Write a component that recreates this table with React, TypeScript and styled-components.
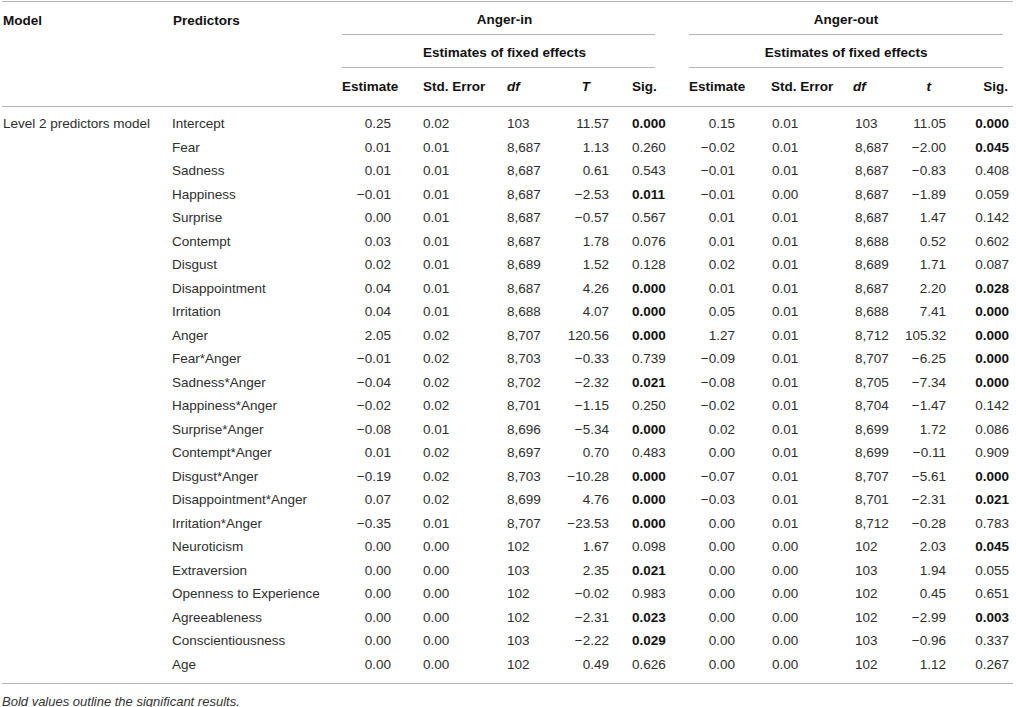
import React from "react";
import styled, { createGlobalStyle } from "styled-components";

const Global = createGlobalStyle`
  html, body { margin: 0; padding: 0; background: #ffffff; }
  body { font-family: "Liberation Sans", Arial, Helvetica, sans-serif; color: #2e2e2e; }
`;

const Page = styled.div`
  width: 1016px;
  height: 707px;
  padding: 1px 0 0 2px;
  box-sizing: border-box;
  overflow: hidden;
`;

const Table = styled.table`
  width: 1011px;
  table-layout: fixed;
  border-collapse: collapse;
  border-top: 1px solid #b4b4b4;
  border-bottom: 1px solid #b4b4b4;
  font-size: 13.5px;
  line-height: 16px;
`;

const HeadCell = styled.th<{ $align?: string; $pl?: number; $pr?: number }>`
  font-weight: bold;
  color: #111;
  text-align: ${(p) => p.$align || "left"};
  padding: 0 ${(p) => p.$pr || 0}px 0 ${(p) => p.$pl || 0}px;
  vertical-align: top;
  white-space: nowrap;
`;

const TopLabel = styled.div`
  padding: 11px 0 0 1px;
`;

const GroupLabel = styled.div<{ $mr: number; $shift: number; $h: number }>`
  margin-right: ${(p) => p.$mr}px;
  height: ${(p) => p.$h}px;
  box-sizing: border-box;
  padding: 10px 0 0 ${(p) => p.$shift}px;
  text-align: center;
  border-bottom: 1px solid #b4b4b4;
`;

const ColHeadRow = styled.tr`
  height: 38px;
  border-bottom: 1px solid #b4b4b4;
  & > th { vertical-align: middle; padding-top: 0; }
`;

const Italic = styled.span`
  font-style: italic;
`;

const Row = styled.tr<{ $first?: boolean; $last?: boolean }>`
  & > td {
    height: 23.5px;
    padding-top: ${(p) => (p.$first ? 6 : 0)}px;
    padding-bottom: ${(p) => (p.$last ? 6 : 0)}px;
  }
`;

const Cell = styled.td<{ $align?: string; $pl?: number; $pr?: number; $bold?: boolean }>`
  text-align: ${(p) => p.$align || "left"};
  padding-left: ${(p) => p.$pl || 0}px;
  padding-right: ${(p) => p.$pr || 0}px;
  font-weight: ${(p) => (p.$bold ? "bold" : "normal")};
  color: ${(p) => (p.$bold ? "#111" : "#2e2e2e")};
  white-space: nowrap;
  vertical-align: middle;
`;

const Footer = styled.div`
  margin-top: 10px;
  font-size: 13px;
  line-height: 16px;
  font-style: italic;
  color: #333;
`;

type Col = { w: number; align: string; pl: number; pr: number; hAlign: string; hpl: number; hpr: number };

const cols: Col[] = [
  { w: 170, align: "left", pl: 1, pr: 0, hAlign: "left", hpl: 1, hpr: 0 },
  { w: 170, align: "left", pl: 0, pr: 0, hAlign: "left", hpl: 0, hpr: 0 },
  { w: 81, align: "right", pl: 0, pr: 32, hAlign: "left", hpl: 0, hpr: 0 },
  { w: 84, align: "left", pl: 0, pr: 0, hAlign: "left", hpl: 0, hpr: 0 },
  { w: 53, align: "left", pl: 0, pr: 0, hAlign: "left", hpl: 0, hpr: 0 },
  { w: 72, align: "right", pl: 0, pr: 23, hAlign: "right", hpl: 0, hpr: 42 },
  { w: 57, align: "left", pl: 0, pr: 0, hAlign: "left", hpl: 0, hpr: 0 },
  { w: 82, align: "right", pl: 0, pr: 36, hAlign: "left", hpl: 0, hpr: 0 },
  { w: 82, align: "left", pl: 1, pr: 0, hAlign: "left", hpl: 0, hpr: 0 },
  { w: 52, align: "left", pl: 2, pr: 0, hAlign: "left", hpl: 0, hpr: 0 },
  { w: 68, align: "right", pl: 0, pr: 27, hAlign: "right", hpl: 0, hpr: 42 },
  { w: 40, align: "right", pl: 0, pr: 4, hAlign: "right", hpl: 0, hpr: 5 },
];

const rows: string[][] = [
  ["Intercept", "0.25", "0.02", "103", "11.57", "0.000*", "0.15", "0.01", "103", "11.05", "0.000*"],
  ["Fear", "0.01", "0.01", "8,687", "1.13", "0.260", "\u22120.02", "0.01", "8,687", "\u22122.00", "0.045*"],
  ["Sadness", "0.01", "0.01", "8,687", "0.61", "0.543", "\u22120.01", "0.01", "8,687", "\u22120.83", "0.408"],
  ["Happiness", "\u22120.01", "0.01", "8,687", "\u22122.53", "0.011*", "\u22120.01", "0.00", "8,687", "\u22121.89", "0.059"],
  ["Surprise", "0.00", "0.01", "8,687", "\u22120.57", "0.567", "0.01", "0.01", "8,687", "1.47", "0.142"],
  ["Contempt", "0.03", "0.01", "8,687", "1.78", "0.076", "0.01", "0.01", "8,688", "0.52", "0.602"],
  ["Disgust", "0.02", "0.01", "8,689", "1.52", "0.128", "0.02", "0.01", "8,689", "1.71", "0.087"],
  ["Disappointment", "0.04", "0.01", "8,687", "4.26", "0.000*", "0.01", "0.01", "8,687", "2.20", "0.028*"],
  ["Irritation", "0.04", "0.01", "8,688", "4.07", "0.000*", "0.05", "0.01", "8,688", "7.41", "0.000*"],
  ["Anger", "2.05", "0.02", "8,707", "120.56", "0.000*", "1.27", "0.01", "8,712", "105.32", "0.000*"],
  ["Fear*Anger", "\u22120.01", "0.02", "8,703", "\u22120.33", "0.739", "\u22120.09", "0.01", "8,707", "\u22126.25", "0.000*"],
  ["Sadness*Anger", "\u22120.04", "0.02", "8,702", "\u22122.32", "0.021*", "\u22120.08", "0.01", "8,705", "\u22127.34", "0.000*"],
  ["Happiness*Anger", "\u22120.02", "0.02", "8,701", "\u22121.15", "0.250", "\u22120.02", "0.01", "8,704", "\u22121.47", "0.142"],
  ["Surprise*Anger", "\u22120.08", "0.01", "8,696", "\u22125.34", "0.000*", "0.02", "0.01", "8,699", "1.72", "0.086"],
  ["Contempt*Anger", "0.01", "0.02", "8,697", "0.70", "0.483", "0.00", "0.01", "8,699", "\u22120.11", "0.909"],
  ["Disgust*Anger", "\u22120.19", "0.02", "8,703", "\u221210.28", "0.000*", "\u22120.07", "0.01", "8,707", "\u22125.61", "0.000*"],
  ["Disappointment*Anger", "0.07", "0.02", "8,699", "4.76", "0.000*", "\u22120.03", "0.01", "8,701", "\u22122.31", "0.021*"],
  ["Irritation*Anger", "\u22120.35", "0.01", "8,707", "\u221223.53", "0.000*", "0.00", "0.01", "8,712", "\u22120.28", "0.783"],
  ["Neuroticism", "0.00", "0.00", "102", "1.67", "0.098", "0.00", "0.00", "102", "2.03", "0.045*"],
  ["Extraversion", "0.00", "0.00", "103", "2.35", "0.021*", "0.00", "0.00", "103", "1.94", "0.055"],
  ["Openness to Experience", "0.00", "0.00", "102", "\u22120.02", "0.983", "0.00", "0.00", "102", "0.45", "0.651"],
  ["Agreeableness", "0.00", "0.00", "102", "\u22122.31", "0.023*", "0.00", "0.00", "102", "\u22122.99", "0.003*"],
  ["Conscientiousness", "0.00", "0.00", "103", "\u22122.22", "0.029*", "0.00", "0.00", "103", "\u22120.96", "0.337"],
  ["Age", "0.00", "0.00", "102", "0.49", "0.626", "0.00", "0.00", "102", "1.12", "0.267"],
];

const colHeads: React.ReactNode[] = [
  "Estimate",
  "Std. Error",
  <Italic>df</Italic>,
  <Italic>T</Italic>,
  "Sig.",
  "Estimate",
  "Std. Error",
  <Italic>df</Italic>,
  <Italic>t</Italic>,
  "Sig.",
];

export default function App() {
  return (
    <Page>
      <Global />
      <Table>
        <colgroup>
          {cols.map((c, i) => (
            <col key={i} style={{ width: c.w }} />
          ))}
        </colgroup>
        <thead>
          <tr>
            <HeadCell rowSpan={3}>
              <TopLabel>Model</TopLabel>
            </HeadCell>
            <HeadCell rowSpan={3}>
              <TopLabel>Predictors</TopLabel>
            </HeadCell>
            <HeadCell colSpan={5}>
              <GroupLabel $mr={34} $shift={12} $h={33}>Anger-in</GroupLabel>
            </HeadCell>
            <HeadCell colSpan={5}>
              <GroupLabel $mr={10} $shift={0} $h={33}>Anger-out</GroupLabel>
            </HeadCell>
          </tr>
          <tr>
            <HeadCell colSpan={5}>
              <GroupLabel $mr={34} $shift={12} $h={33}>Estimates of fixed effects</GroupLabel>
            </HeadCell>
            <HeadCell colSpan={5}>
              <GroupLabel $mr={10} $shift={0} $h={33}>Estimates of fixed effects</GroupLabel>
            </HeadCell>
          </tr>
          <ColHeadRow>
            {colHeads.map((h, i) => {
              const c = cols[i + 2];
              return (
                <HeadCell key={i} $align={c.hAlign} $pl={c.hpl} $pr={c.hpr}>
                  {h}
                </HeadCell>
              );
            })}
          </ColHeadRow>
        </thead>
        <tbody>
          {rows.map((r, ri) => (
            <Row key={ri} $first={ri === 0} $last={ri === rows.length - 1}>
              <Cell $pl={1}>{ri === 0 ? "Level 2 predictors model" : ""}</Cell>
              {r.map((v, ci) => {
                const c = cols[ci + 1];
                const bold = v.endsWith("*");
                return (
                  <Cell key={ci} $align={c.align} $pl={c.pl} $pr={c.pr} $bold={bold}>
                    {bold ? v.slice(0, -1) : v}
                  </Cell>
                );
              })}
            </Row>
          ))}
        </tbody>
      </Table>
      <Footer>Bold values outline the significant results.</Footer>
    </Page>
  );
}
